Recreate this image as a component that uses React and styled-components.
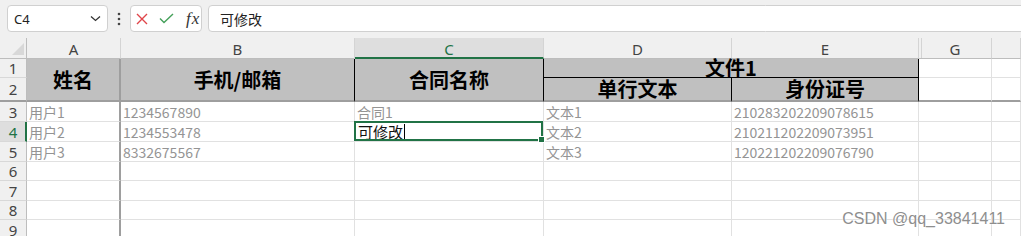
import React from "react";
import styled, { createGlobalStyle } from "styled-components";

const GREEN = "#217346";
const FROZEN = "2px solid #9e9e9e";
const BLACK = "1px solid #000";

const GlobalStyle = createGlobalStyle`
  html, body { margin: 0; padding: 0; background: #fff; }
  body { font-family: "Noto Sans CJK SC", "Noto Sans", sans-serif; overflow: hidden; }
`;

const Page = styled.div`
  position: relative;
  width: 1021px;
  height: 236px;
  overflow: hidden;
  background: #fff;
`;

const Toolbar = styled.div`
  height: 38px;
  box-sizing: border-box;
  background: #f0f0f0;
  display: flex;
  align-items: stretch;
  padding: 5px 0 6px 7px;
`;

const NameBox = styled.div`
  width: 101px;
  box-sizing: border-box;
  display: flex;
  align-items: center;
  justify-content: space-between;
  padding: 0 6px 0 6px;
  background: #fff;
  border: 1px solid #d0d0d0;
  border-radius: 4px;
  font: 13px "Noto Sans", sans-serif;
  color: #222;
`;

const Dots = styled.div`
  width: 22px;
  display: flex;
  align-items: center;
  justify-content: center;
`;

const ActionBox = styled.div`
  width: 72px;
  box-sizing: border-box;
  display: flex;
  align-items: center;
  gap: 11px;
  padding-left: 5px;
  background: #fff;
  border: 1px solid #d0d0d0;
  border-radius: 4px;
`;

const Fx = styled.span`
  font: italic 17px "Liberation Serif", serif;
  color: #333;
  letter-spacing: 1px;
  margin-left: 1px;
`;

const FormulaBox = styled.div`
  flex: 1;
  margin-left: 6px;
  margin-right: -6px;
  display: flex;
  align-items: center;
  padding-left: 11px;
  background: #fff;
  border: 1px solid #d0d0d0;
  border-radius: 4px;
  font-size: 14px;
  color: #222;
`;

const Sheet = styled.div`
  display: grid;
  grid-template-columns: 27px 94px 234px 189px 188px 187px 73px 1fr;
  grid-template-rows: 21px 19px 24px 20px 20px 20px 19px 20px 19px 20px;
`;

const Base = styled.div`
  box-sizing: border-box;
  grid-column: ${(p) => p.$col} / span ${(p) => p.$cspan || 1};
  grid-row: ${(p) => p.$row} / span ${(p) => p.$rspan || 1};
  display: flex;
  align-items: center;
  min-width: 0;
  white-space: nowrap;
`;

const Corner = styled(Base)`
  background: #f0f0f0;
  border-right: 1px solid #bdbdbd;
  border-bottom: 1px solid #bdbdbd;
  justify-content: flex-end;
  align-items: flex-end;
  padding: 0 2px 3px 0;
`;

const Triangle = styled.div`
  width: 0;
  height: 0;
  border-left: 12px solid transparent;
  border-bottom: 12px solid #d8d8d8;
`;

const ColHead = styled(Base)`
  justify-content: center;
  background: ${(p) => (p.$active ? "#dedede" : "#f0f0f0")};
  color: ${(p) => (p.$active ? GREEN : "#444")};
  border-right: 1px solid #d4d4d4;
  border-bottom: ${(p) => (p.$active ? `2px solid ${GREEN}` : "1px solid #bdbdbd")};
  box-shadow: ${(p) => (p.$hidden ? "inset 2px 0 0 #f0f0f0, inset 3px 0 0 #d4d4d4" : "none")};
  font: 15px "Noto Sans", sans-serif;
  padding-top: 2px;
`;

const RowHead = styled(Base)`
  justify-content: center;
  background: ${(p) => (p.$active ? "#dedede" : "#f0f0f0")};
  color: ${(p) => (p.$active ? GREEN : "#444")};
  border-right: ${(p) => (p.$active ? `2px solid ${GREEN}` : "1px solid #bdbdbd")};
  border-bottom: ${(p) => p.$bottom || "1px solid #d8d8d8"};
  font: 15px "Noto Sans", sans-serif;
  padding-left: ${(p) => (p.$active ? "1px" : "0")};
`;

const TitleCell = styled(Base)`
  justify-content: center;
  background: #c0c0c0;
  border-right: ${(p) => p.$right};
  border-bottom: ${(p) => p.$bottom};
  font-size: 20px;
  font-weight: 700;
  line-height: 18px;
  color: #000;
  overflow: visible;
`;

const DataCell = styled(Base)`
  padding-left: 2px;
  border-right: ${(p) => p.$right || "1px solid #e1e1e1"};
  border-bottom: ${(p) => p.$bottom || "1px solid #e1e1e1"};
  font-size: 14px;
  color: #949494;
  overflow: hidden;
`;

const EditCell = styled(DataCell)`
  position: relative;
  overflow: visible;
  color: #111;
  font-size: 15px;
  padding-left: 3px;
`;

const Selection = styled.div`
  position: absolute;
  left: -1px;
  top: -1px;
  right: 0;
  bottom: 0;
  border: 2px solid ${GREEN};
  pointer-events: none;
`;

const Handle = styled.div`
  position: absolute;
  right: -4px;
  bottom: -4px;
  width: 5px;
  height: 5px;
  background: ${GREEN};
  border: 1px solid #fff;
`;

const Caret = styled.span`
  display: inline-block;
  width: 1px;
  height: 16px;
  background: #000;
  margin-left: 1px;
`;

const Watermark = styled.div`
  position: absolute;
  right: 16px;
  bottom: 8px;
  font: 16px "Liberation Sans", Arial, sans-serif;
  color: #8e8e8e;
  text-shadow: 0 0 2px #fff, 0 0 1px #fff;
`;

const cols = ["A", "B", "C", "D", "E", "G", ""];
const data = [
  ["用户1", "1234567890", "合同1", "文本1", "210283202209078615"],
  ["用户2", "1234553478", null, "文本2", "210211202209073951"],
  ["用户3", "8332675567", "", "文本3", "120221202209076790"],
  ["", "", "", "", ""],
  ["", "", "", "", ""],
  ["", "", "", "", ""],
  ["", "", "", "", ""],
];

function Chevron() {
  return (
    <svg width="11" height="7" viewBox="0 0 11 7">
      <polyline points="1,1.5 5.5,5.5 10,1.5" fill="none" stroke="#333" strokeWidth="1.3" />
    </svg>
  );
}

export default function App() {
  return (
    <Page>
      <GlobalStyle />
      <Toolbar>
        <NameBox>
          <span>C4</span>
          <Chevron />
        </NameBox>
        <Dots>
          <svg width="4" height="14" viewBox="0 0 4 14">
            <circle cx="2" cy="2" r="1.3" fill="#444" />
            <circle cx="2" cy="7" r="1.3" fill="#444" />
            <circle cx="2" cy="12" r="1.3" fill="#444" />
          </svg>
        </Dots>
        <ActionBox>
          <svg width="12" height="12" viewBox="0 0 12 12">
            <path d="M1 1 L11 11 M11 1 L1 11" stroke="#e0454a" strokeWidth="1.4" fill="none" />
          </svg>
          <svg width="15" height="11" viewBox="0 0 15 11">
            <polyline points="1,5.5 5,9.5 14,1" stroke="#45a05a" strokeWidth="1.4" fill="none" />
          </svg>
          <Fx>fx</Fx>
        </ActionBox>
        <FormulaBox>可修改</FormulaBox>
      </Toolbar>

      <Sheet>
        <Corner $col={1} $row={1}>
          <Triangle />
        </Corner>
        {cols.map((c, i) => (
          <ColHead key={"c" + i} $col={i + 2} $row={1} $active={c === "C"} $hidden={c === "G"}>
            {c}
          </ColHead>
        ))}

        {[1, 2, 3, 4, 5, 6, 7, 8, 9].map((r) => (
          <RowHead
            key={"r" + r}
            $col={1}
            $row={r + 1}
            $active={r === 4}
            $bottom={r === 2 ? FROZEN : undefined}
          >
            {r}
          </RowHead>
        ))}

        <TitleCell $col={2} $row={2} $rspan={2} $right={FROZEN} $bottom={FROZEN}>姓名</TitleCell>
        <TitleCell $col={3} $row={2} $rspan={2} $right={BLACK} $bottom={FROZEN}>手机/邮箱</TitleCell>
        <TitleCell $col={4} $row={2} $rspan={2} $right={BLACK} $bottom={FROZEN}>合同名称</TitleCell>
        <TitleCell $col={5} $row={2} $cspan={2} $right={BLACK} $bottom={BLACK}>文件1</TitleCell>
        <TitleCell $col={5} $row={3} $right={BLACK} $bottom={FROZEN}>单行文本</TitleCell>
        <TitleCell $col={6} $row={3} $right={BLACK} $bottom={FROZEN}>身份证号</TitleCell>
        <DataCell $col={7} $row={2} />
        <DataCell $col={8} $row={2} />
        <DataCell $col={7} $row={3} $bottom={FROZEN} />
        <DataCell $col={8} $row={3} $bottom={FROZEN} />

        {data.map((row, ri) =>
          [...row, "", ""].map((v, ci) =>
            v === null ? (
              <EditCell key={ri + "-" + ci} $col={ci + 2} $row={ri + 4}>
                可修改
                <Caret />
                <Selection>
                  <Handle />
                </Selection>
              </EditCell>
            ) : (
              <DataCell
                key={ri + "-" + ci}
                $col={ci + 2}
                $row={ri + 4}
                $right={ci === 0 ? FROZEN : undefined}
              >
                {v}
              </DataCell>
            )
          )
        )}
      </Sheet>

      <Watermark>CSDN @qq_33841411</Watermark>
    </Page>
  );
}
